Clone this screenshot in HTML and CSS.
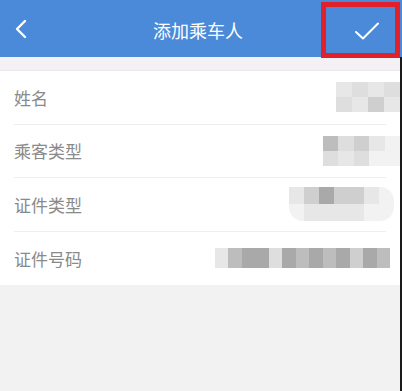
FILE: index.html
```html
<!DOCTYPE html>
<html lang="zh">
<head>
<meta charset="utf-8">
<link rel="stylesheet" href="styles.css">
</head>
<body>
<div class="page">
  <header class="bar">
    <svg class="back" width="14" height="20" viewBox="0 0 14 20"><path d="M11 2 L3 10 L11 18" fill="none" stroke="#fff" stroke-width="2.4" stroke-linecap="round" stroke-linejoin="round"/></svg>
    <div class="title">添加乘车人</div>
    <div class="ok">
      <svg width="26" height="20" viewBox="0 0 26 20"><path d="M2 11 L9 17.5 L24 2.5" fill="none" stroke="#fff" stroke-width="2" stroke-linecap="round" stroke-linejoin="round"/></svg>
    </div>
  </header>
  <div class="gap"></div>
  <main class="list">
    <div class="row">
      <span class="label">姓名</span>
      <div class="blur b1">
        <div class="cells"><i class="s1"></i><i class="s2"></i><i class="s1"></i><i class="s2"></i></div>
        <div class="cells"><i class="s2"></i><i class="s1"></i><i class="s3"></i><i class="s1"></i></div>
      </div>
    </div>
    <div class="row">
      <span class="label">乘客类型</span>
      <div class="blur b2">
        <div class="cells"><i class="s4"></i><i class="s2"></i><i class="s3"></i><i class="s1"></i><i class="s0"></i></div>
        <div class="cells"><i class="s2"></i><i class="s1"></i><i class="s2"></i><i class="s0"></i><i class="s0"></i></div>
      </div>
    </div>
    <div class="row">
      <span class="label">证件类型</span>
      <div class="blur b3">
        <div class="cells"><i class="s1"></i><i class="s3"></i><i class="s5"></i><i class="s3"></i><i class="s3"></i><i class="s1"></i><i class="s0"></i></div>
        <div class="cells"><i class="s0"></i><i class="s1"></i><i class="s1"></i><i class="s1"></i><i class="s1"></i><i class="s0"></i><i class="s0"></i></div>
      </div>
    </div>
    <div class="row">
      <span class="label">证件号码</span>
      <div class="blur b4">
        <div class="cells"><i class="s1"></i><i class="s4"></i><i class="s5"></i><i class="s5"></i><i class="s2"></i><i class="s5"></i><i class="s4"></i><i class="s5"></i><i class="s4"></i><i class="s5"></i><i class="s3"></i><i class="s5"></i><i class="s4"></i></div>
      </div>
    </div>
  </main>
  <div class="highlight"></div>
</div>
</body>
</html>
```

FILE: styles.css
```css
* { box-sizing: border-box; }
html, body { margin: 0; padding: 0; }
body {
  width: 402px;
  height: 391px;
  background: #f2f2f3;
  font-family: "Noto Sans CJK SC", "Noto Sans", sans-serif;
  overflow: hidden;
}
.page {
  position: relative;
  width: 402px;
  height: 391px;
  border-right: 2px solid #1a1a1a;
}
.bar {
  height: 57px;
  margin-right: -2px;
  background: #4a8ad9;
  display: flex;
  align-items: center;
  padding-left: 14px;
}
.back { flex: none; }
.title {
  flex: 1;
  text-align: center;
  color: #fff;
  font-size: 18px;
  padding-left: 46px;
  margin-top: 2px;
}
.ok {
  width: 80px;
  display: flex;
  justify-content: center;
  padding-left: 10px;
  margin-top: 4px;
}
.gap {
  height: 14px;
  background: #f3f1f3;
  border-bottom: 1px solid #e8e8ea;
}
.list { background: #fff; }
.row {
  height: 53.5px;
  margin-left: 14px;
  margin-right: 14px;
  display: flex;
  align-items: center;
  justify-content: space-between;
  border-bottom: 1px solid #eeeeee;
}
.row:last-child { border-bottom: none; margin-right: 0; }
.label {
  color: #8a8a8a;
  font-size: 17px;
}
.blur { display: flex; flex-direction: column; }
.cells { display: flex; }
.cells i { display: block; width: 14px; height: 15px; }
.s0 { background: #f2f2f2; }
.s1 { background: #e7e7e7; }
.s2 { background: #dedede; }
.s3 { background: #cfcfcf; }
.s4 { background: #bdbdbd; }
.s5 { background: #a9a9a9; }
.b1 { margin-right: -14px; }
.b1 .cells i { width: 16px; }
.b2 { margin-right: -14px; }
.b2 .cells i { width: 15.5px; }
.b3 { margin-right: -8px; border-radius: 0 14px 14px 14px; overflow: hidden; }
.b3 .cells i { width: 15px; height: 17px; }
.b4 { margin-right: 10px; }
.b4 .cells i { width: 13.5px; height: 20px; }
.highlight {
  position: absolute;
  left: 321px;
  top: 2px;
  width: 79px;
  height: 56px;
  border: 5px solid #e1202a;
}
```
